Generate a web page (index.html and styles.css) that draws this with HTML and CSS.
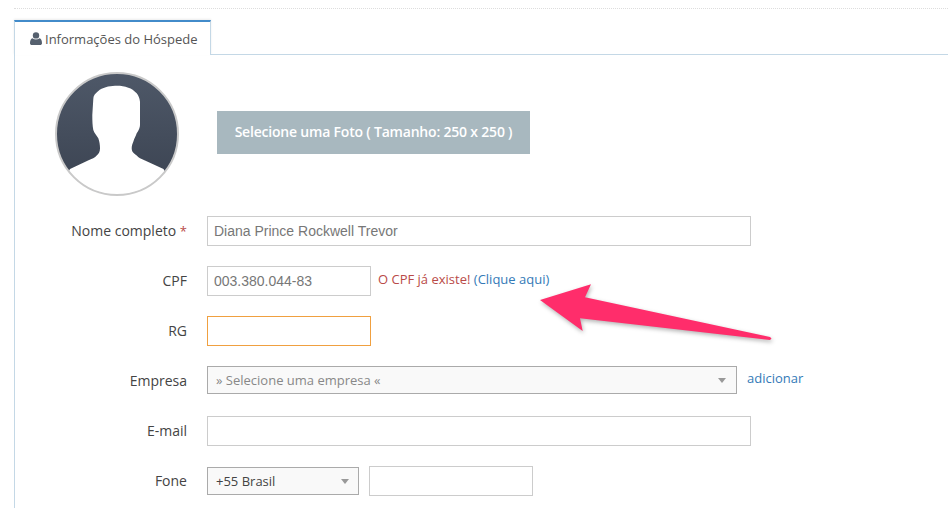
FILE: index.html
```html
<!DOCTYPE html>
<html lang="pt-BR">
<head>
<meta charset="UTF-8" />
<meta name="viewport" content="width=device-width, initial-scale=1.0" />
<title>Informações do Hóspede</title>
<link rel="stylesheet" href="styles.css">
</head>
<body>

<div class="page">
  <div class="dotted-rule"></div>

  <div class="tabs">
    <a class="tab" href="#">
      <svg class="tab-icon" viewBox="0 0 12 13">
        <circle cx="6" cy="3.4" r="3.2"/>
        <path d="M0 11.200C0 8.600.7 6.600 2.600 6.200 3.400 7 4.600 7.400 6 7.400s2.600-.4 3.400-1.200c1.900.4 2.600 2.400 2.600 5 0 1.200-.8 1.800-1.900 1.800H1.900C.8 13 0 12.400 0 11.200z"/>
      </svg>
      Informações do Hóspede
    </a>
  </div>

  <div class="panel">
    <div class="photo-row">
      <svg class="avatar" viewBox="0 0 124 124">
        <defs>
          <linearGradient id="avatarBg" x1="0" y1="0" x2="0" y2="1">
            <stop offset="0" stop-color="#4e5868"/>
            <stop offset="1" stop-color="#3a4250"/>
          </linearGradient>
          <clipPath id="avatarClip"><circle cx="62" cy="62" r="61"/></clipPath>
        </defs>
        <circle cx="62" cy="62" r="61" fill="url(#avatarBg)"/>
        <path clip-path="url(#avatarClip)" fill="#fff" d="M60 13.700C54 13.900 47 15.500 43.300 19 40 21.500 38.300 24 38.300 27L37.300 43C37.300 49 37.500 54 38.300 58 39.500 62 42 63.500 43.300 66.300 44.500 69.500 45 73 45 76.300 45 80 43.500 82 41.700 83.500 40 85.500 37 87 33 88.500L15 97 0 124H124L108.500 97 90 88.500C86 87 83.500 85.500 81.700 83.500 79 81.500 76.700 80 76.700 76.300 76.700 73.500 77.500 71.500 78.300 69.700 79.500 66 81 63.500 81.700 61.300 84 58 85 55 85 53V29.700C84.500 26 83.500 23.500 81.700 21.300 79 18.500 76.500 16.500 73.300 15.700 69 14 65 13.500 60 13.700Z"/>
        <circle cx="62" cy="62" r="61" fill="none" stroke="#c9c9c9" stroke-width="2"/>
      </svg>
      <button class="photo-button" type="button">Selecione uma Foto ( Tamanho: 250 x 250 )</button>
    </div>

    <form class="guest-form">
      <div class="form-row">
        <label>Nome completo <span class="required">*</span></label>
        <input class="field field-long" type="text" value="Diana Prince Rockwell Trevor">
      </div>
      <div class="form-row">
        <label>CPF</label>
        <input class="field field-short" type="text" value="003.380.044-83">
        <span class="cpf-error">O CPF já existe! <a href="#">(Clique aqui)</a></span>
      </div>
      <div class="form-row">
        <label>RG</label>
        <input class="field field-short field-focus" type="text">
      </div>
      <div class="form-row">
        <label>Empresa</label>
        <div class="select select-company">
          <span class="select-placeholder">» Selecione uma empresa «</span>
          <span class="caret"></span>
        </div>
        <a class="add-link" href="#">adicionar</a>
      </div>
      <div class="form-row">
        <label>E-mail</label>
        <input class="field field-long" type="text">
      </div>
      <div class="form-row">
        <label>Fone</label>
        <div class="select select-country">
          <span>+55 Brasil</span>
          <span class="caret"></span>
        </div>
        <input class="field field-short" type="text">
      </div>
    </form>
  </div>

  <!-- annotation arrow drawn over the form -->
  <svg class="annotation" viewBox="0 0 948 508">
    <polygon points="540,300 591,284.300 585,297.300 770,337 771.500,338.500 770,340 580,318.300 582.700,331" fill="#ff2d6b"/>
  </svg>
</div>

</body>
</html>
```

FILE: styles.css
```css
:root {
  --line-blue: #c4d8e6;
  --tab-blue: #428bca;
  --link-blue: #337ab7;
  --field-border: #ccc;
  --font-body: 'Open Sans', sans-serif;
}

* { box-sizing: border-box; }

body {
  margin: 0;
  background: #fff;
  font-family: var(--font-body);
  font-size: 14px;
  color: #444;
}

a { color: var(--link-blue); text-decoration: none; }

.page {
  position: relative;
  height: 508px;
  overflow: hidden;
  padding: 8px 0 0 14px;
}

.dotted-rule { border-top: 1px dotted #ddd; }

.tabs { display: flex; margin-top: 11px; }

.tab {
  display: flex;
  align-items: center;
  gap: 3px;
  width: 197px;
  height: 35px;
  padding-left: 15px;
  margin-bottom: -1px;
  position: relative;
  background: #fff;
  border-top: 2px solid var(--tab-blue);
  border-left: 1px solid var(--line-blue);
  border-right: 1px solid var(--line-blue);
  box-shadow: 0 -1px 2px rgba(0,0,0,0.08);
  font-size: 13px;
  color: #555;
}

.tab-icon { width: 12px; height: 13px; fill: #55606e; }

.panel {
  height: 454px;
  border-top: 1px solid var(--line-blue);
  border-left: 1px solid var(--line-blue);
  padding-top: 17px;
}

.photo-row {
  display: flex;
  align-items: flex-start;
  gap: 38px;
  margin-left: 40px;
}

.avatar { width: 124px; height: 124px; }

.photo-button {
  width: 313px;
  height: 43px;
  margin-top: 39px;
  padding: 0 0 2px;
  border: none;
  background: #a8b8bf;
  color: #fff;
  font-family: var(--font-body);
  font-size: 14px;
  font-weight: 600;
  letter-spacing: -0.2px;
}

.guest-form { margin-top: 20px; }

.form-row {
  display: flex;
  align-items: flex-start;
  height: 30px;
  margin-bottom: 20px;
}

.form-row label {
  width: 172px;
  margin-right: 20px;
  text-align: right;
  line-height: 30px;
}

.required { color: #b94a48; font-size: 13px; }

.field {
  height: 30px;
  padding: 0 6px;
  border: 1px solid var(--field-border);
  background: #fff;
  font-family: 'Liberation Sans', sans-serif;
  font-size: 14px;
  color: #777;
  outline: none;
}

.field-long { width: 544px; }
.field-short { width: 164px; }
.field-focus { border-color: #f0a040; }

.cpf-error {
  margin-left: 7px;
  font-size: 13px;
  line-height: 27px;
  color: #b94a48;
}

.select {
  display: flex;
  align-items: center;
  justify-content: space-between;
  height: 28px;
  padding: 0 10px 0 8px;
  border: 1px solid #aaa;
  background: #f9f9f9;
  font-size: 13px;
  color: #444;
}

.select-company { width: 530px; }
.select-country { width: 152px; margin: 1px 10px 0 0; padding-right: 9px; }
.select-placeholder { color: #888; }

.caret {
  border-top: 5px solid #999;
  border-left: 4px solid transparent;
  border-right: 4px solid transparent;
}

.add-link { margin-left: 10px; font-size: 13px; line-height: 25px; }

.annotation {
  position: absolute;
  top: 0;
  left: 0;
  width: 948px;
  height: 508px;
  pointer-events: none;
  filter: drop-shadow(1px 2px 2px rgba(0,0,0,0.3));
}
```
